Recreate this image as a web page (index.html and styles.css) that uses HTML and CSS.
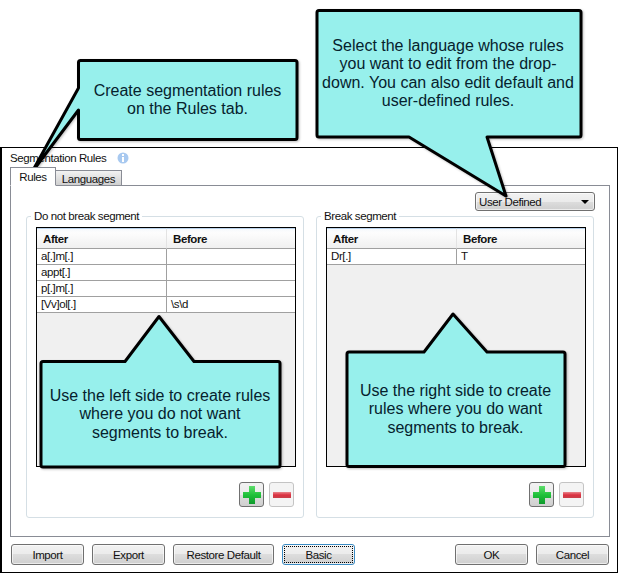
FILE: index.html
```html
<!DOCTYPE html>
<html lang="en">
<head>
  <meta charset="UTF-8">
  <title>Segmentation Rules</title>
  <link rel="stylesheet" href="styles.css">
</head>
<body>

  <svg class="defs" width="0" height="0">
    <defs>
      <linearGradient id="plusFill" x1="0" y1="0" x2="0" y2="1">
        <stop offset="0" stop-color="#5fdc6c"/>
        <stop offset="0.5" stop-color="#1fc13a"/>
        <stop offset="1" stop-color="#0f9a2c"/>
      </linearGradient>
      <linearGradient id="minusFill" x1="0" y1="0" x2="0" y2="1">
        <stop offset="0" stop-color="#e8868c"/>
        <stop offset="0.5" stop-color="#dc3040"/>
        <stop offset="1" stop-color="#c8404a"/>
      </linearGradient>
    </defs>
  </svg>

  <div class="window">
    <div class="title-row">
      <span>Segmentation Rules</span>
      <svg class="info-icon" width="12" height="12" viewBox="0 0 12 12">
        <circle cx="6" cy="6" r="5.500" fill="#a8c9f0"/>
        <rect x="5" y="2" width="2" height="2" fill="#fff"/>
        <rect x="5" y="5" width="2" height="5" fill="#fff"/>
      </svg>
    </div>

    <div class="tabs">
      <div class="tab tab-active">Rules</div>
      <div class="tab">Languages</div>
    </div>

    <div class="panel">
      <div class="panel-top">
        <div class="dropdown">
          <span>User Defined</span>
          <span class="dropdown-arrow"></span>
        </div>
      </div>

      <div class="groups">
        <div class="group">
          <div class="group-title">Do not break segment</div>
          <div class="grid">
            <table>
              <tr><th>After</th><th>Before</th></tr>
              <tr><td>a[.]m[.]</td><td></td></tr>
              <tr><td>appt[.]</td><td></td></tr>
              <tr><td>p[.]m[.]</td><td></td></tr>
              <tr><td>[Vv]ol[.]</td><td>\s\d</td></tr>
            </table>
          </div>
          <div class="row-buttons">
            <div class="icon-btn">
              <svg width="18" height="18" viewBox="0 0 18 18"><path fill="url(#plusFill)" d="M6 0h6v6h6v6h-6v6H6v-6H0V6h6z"/></svg>
            </div>
            <div class="icon-btn icon-btn-off">
              <svg width="18" height="6" viewBox="0 0 18 6"><rect fill="url(#minusFill)" width="18" height="6"/></svg>
            </div>
          </div>
        </div>

        <div class="group">
          <div class="group-title">Break segment</div>
          <div class="grid">
            <table>
              <tr><th>After</th><th>Before</th></tr>
              <tr><td>Dr[.]</td><td>T</td></tr>
            </table>
          </div>
          <div class="row-buttons">
            <div class="icon-btn">
              <svg width="18" height="18" viewBox="0 0 18 18"><path fill="url(#plusFill)" d="M6 0h6v6h6v6h-6v6H6v-6H0V6h6z"/></svg>
            </div>
            <div class="icon-btn icon-btn-off">
              <svg width="18" height="6" viewBox="0 0 18 6"><rect fill="url(#minusFill)" width="18" height="6"/></svg>
            </div>
          </div>
        </div>
      </div>
    </div>

    <div class="footer">
      <button class="btn">Import</button>
      <button class="btn">Export</button>
      <button class="btn btn-wide">Restore Default</button>
      <button class="btn btn-focus">Basic</button>
      <button class="btn btn-ok">OK</button>
      <button class="btn">Cancel</button>
    </div>
  </div>

  <!-- callouts sit on top of the dialog -->
  <svg class="callout-shapes" width="618" height="573" viewBox="0 0 618 573">
    <path d="M80 60.500H295a2 2 0 0 1 2 2V137.500a2 2 0 0 1-2 2H80.500a2 2 0 0 1-2-2V110L32 172L78.500 88V62.500a2 2 0 0 1 2-2z"/>
    <path d="M319 10.500H579a2 2 0 0 1 2 2V135a2 2 0 0 1-2 2H487L506 196L409 137H319a2 2 0 0 1-2-2V12.500a2 2 0 0 1 2-2z"/>
    <path d="M43 361.500H125L159 316.500L194 361.500H278a2 2 0 0 1 2 2V465a2 2 0 0 1-2 2H43a2 2 0 0 1-2-2V363.500a2 2 0 0 1 2-2z"/>
    <path d="M349 352H424L453 314L487 352H563a2 2 0 0 1 2 2V464.500a2 2 0 0 1-2 2H349a2 2 0 0 1-2-2V354a2 2 0 0 1 2-2z"/>
  </svg>
  <div class="callout callout-rules">Create segmentation rules<br>on the Rules tab.</div>
  <div class="callout callout-lang">Select the language whose rules<br>you want to edit from the drop-<br>down. You can also edit default and<br>user-defined rules.</div>
  <div class="callout callout-left">Use the left side to create rules<br>where you do not want<br>segments to break.</div>
  <div class="callout callout-right">Use the right side to create<br>rules where you do want<br>segments to break.</div>

</body>
</html>
```

FILE: styles.css
```css
body {
  margin: 0;
  width: 618px;
  height: 573px;
  padding-top: 147px;
  box-sizing: border-box;
  position: relative;
  overflow: hidden;
  background: #fff;
  font-family: "Liberation Sans", Arial, sans-serif;
  font-size: 11.500px;
  letter-spacing: -0.4px;
  color: #111;
}

.defs {
  position: absolute;
}

.window {
  width: 618px;
  height: 426px;
  box-sizing: border-box;
  border: 1px solid #000;
  border-left-width: 2px;
  display: flex;
  flex-direction: column;
  padding: 0 7px 0 8px;
}

.title-row {
  height: 19px;
  flex: none;
  display: flex;
  align-items: center;
  gap: 11px;
}

.info-icon {
  display: block;
}

.tabs {
  height: 19px;
  flex: none;
  display: flex;
  align-items: flex-end;
  position: relative;
  z-index: 1;
  margin-bottom: -1px;
}

.tab {
  width: 67px;
  height: 16px;
  box-sizing: border-box;
  line-height: 16px;
  text-align: center;
  border: 1px solid #898c95;
  background: linear-gradient(#f2f2f2, #cfcfcf);
}

.tab-active {
  width: 46px;
  height: 19px;
  line-height: 18px;
  background: #fff;
  border-bottom-color: #fff;
  margin-right: -1px;
  position: relative;
  z-index: 1;
}

.panel {
  height: 352px;
  flex: none;
  box-sizing: border-box;
  border: 1px solid #898c95;
  padding: 6px 14px 0 15px;
  background: #fff;
}

.panel-top {
  display: flex;
  justify-content: flex-end;
  height: 24px;
}

.dropdown {
  width: 120px;
  height: 19px;
  box-sizing: border-box;
  border: 1px solid #707070;
  border-radius: 3px;
  background: linear-gradient(#f2f2f2 0, #ebebeb 50%, #ddd 50%, #cfcfcf 100%);
  box-shadow: inset 0 0 0 1px rgba(255, 255, 255, 0.6);
  display: flex;
  align-items: center;
  justify-content: space-between;
  padding: 0 5px 0 3px;
}

.dropdown-arrow {
  width: 0;
  height: 0;
  border-left: 4px solid transparent;
  border-right: 4px solid transparent;
  border-top: 4px solid #000;
}

.groups {
  display: flex;
  gap: 12px;
}

.group {
  position: relative;
  width: 278px;
  height: 302px;
  box-sizing: border-box;
  border: 1px solid #d5dfe5;
  border-radius: 3px;
  padding: 10px 7px 9px 9px;
}

.group-title {
  position: absolute;
  top: -8px;
  left: 4px;
  padding: 0 3px;
  background: #fff;
  line-height: 15px;
}

.grid {
  height: 240px;
  box-sizing: border-box;
  border: 1px solid #000;
  background: #f0f0f0;
}

.grid table {
  width: 100%;
  border-collapse: separate;
  border-spacing: 0;
  table-layout: fixed;
  background: #fff;
}

.grid th,
.grid td {
  box-sizing: border-box;
}

.grid th:first-child,
.grid td:first-child {
  width: 130px;
}

.grid th {
  height: 21px;
  padding: 1px 0 0 6px;
  text-align: left;
  background: linear-gradient(#f6f9fc, #fdfdfd 20%, #f0f0f0);
  border-top: 1px solid #b9d1ea;
  border-right: 1px solid #e3e3e3;
  border-bottom: 1px solid #a0a0a0;
}

.grid td {
  height: 16px;
  padding: 0 0 0 4px;
  line-height: 15px;
  border-right: 1px solid #a0a0a0;
  border-bottom: 1px solid #a0a0a0;
}

.grid tr:nth-child(n+4) td {
  height: 15px;
}

.grid th:last-child,
.grid td:last-child {
  border-right: 0;
}

.row-buttons {
  display: flex;
  justify-content: flex-end;
  gap: 5px;
  margin: 15px 2px 0 0;
}

.icon-btn {
  width: 25px;
  height: 25px;
  box-sizing: border-box;
  border: 1px solid #707070;
  border-radius: 3px;
  background: linear-gradient(#f2f2f2 0, #ebebeb 50%, #ddd 50%, #cfcfcf 100%);
  display: flex;
  align-items: center;
  justify-content: center;
}

.icon-btn-off {
  border-color: #c4c4c4;
  background: #f4f4f4;
}

.footer {
  flex: none;
  height: 35px;
  box-sizing: border-box;
  display: flex;
  gap: 8px;
  padding: 7px 0 0 1px;
}

.btn {
  width: 73px;
  height: 21px;
  padding: 0;
  font: inherit;
  letter-spacing: inherit;
  color: inherit;
  border: 1px solid #707070;
  border-radius: 3px;
  background: linear-gradient(#f2f2f2 0, #ebebeb 50%, #ddd 50%, #cfcfcf 100%);
  box-shadow: inset 0 0 0 1px rgba(255, 255, 255, 0.6);
}

.btn-wide {
  width: 101px;
}

.btn-focus {
  border-color: #3c8cc4;
  outline: 1px dotted #000;
  outline-offset: -3px;
}

.btn-ok {
  margin-left: 92px;
}

.callout-shapes {
  position: absolute;
  top: 0;
  left: 0;
  fill: #97f0ec;
  stroke: #000;
  stroke-width: 3;
  stroke-linejoin: round;
  filter: drop-shadow(1px 1px 1px rgba(0, 0, 0, 0.25));
}

.callout {
  position: absolute;
  display: flex;
  align-items: center;
  justify-content: center;
  text-align: center;
  font-size: 16px;
  letter-spacing: 0;
  line-height: 18.400px;
  color: #06222e;
}

.callout-rules {
  left: 78px;
  top: 60px;
  width: 219px;
  height: 80px;
}

.callout-lang {
  left: 316px;
  top: 10px;
  width: 264px;
  height: 127px;
}

.callout-left {
  left: 41px;
  top: 362px;
  width: 238px;
  height: 105px;
}

.callout-right {
  left: 347px;
  top: 352px;
  width: 217px;
  height: 115px;
}
```
